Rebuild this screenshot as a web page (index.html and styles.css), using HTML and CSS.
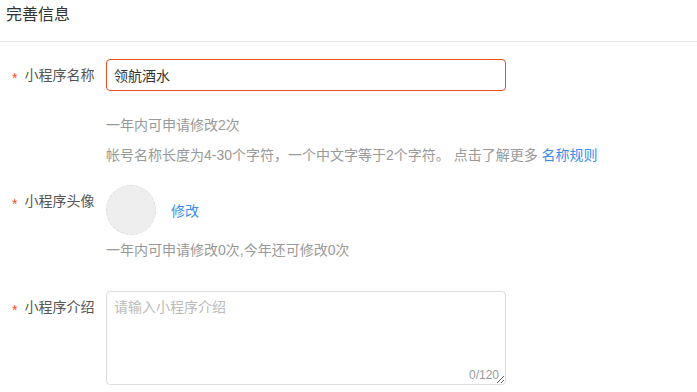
FILE: index.html
```html
<!DOCTYPE html>
<html lang="zh-CN">
<head>
<meta charset="utf-8">
<title>完善信息</title>
<link rel="stylesheet" href="styles.css">
</head>
<body>
<div class="page">
  <div class="header">完善信息</div>
  <div class="form">
    <div class="row row-name">
      <div class="label"><span class="star">*</span>小程序名称</div>
      <div class="field">
        <input class="text-input" type="text" value="领航酒水">
      </div>
    </div>
    <div class="help help-name">
      <div class="help-line">一年内可申请修改2次</div>
      <div class="help-line">帐号名称长度为4-30个字符，一个中文字等于2个字符。 点击了解更多 <a class="link" href="#">名称规则</a></div>
    </div>
    <div class="row row-avatar">
      <div class="label"><span class="star">*</span>小程序头像</div>
      <div class="field avatar-field">
        <div class="avatar"></div>
        <a class="link edit" href="#">修改</a>
      </div>
    </div>
    <div class="help">
      <div class="help-line">一年内可申请修改0次,今年还可修改0次</div>
    </div>
    <div class="row row-intro">
      <div class="label"><span class="star">*</span>小程序介绍</div>
      <div class="field textarea-wrap">
        <textarea class="textarea" placeholder="请输入小程序介绍"></textarea>
        <span class="counter">0/120</span>
      </div>
    </div>
  </div>
</div>
</body>
</html>
```

FILE: styles.css
```css
html, body {
  margin: 0;
  padding: 0;
  background: #fff;
}
body {
  font-family: "Liberation Sans", "Noto Sans CJK SC", sans-serif;
  font-size: 14px;
  color: #333;
}
.header {
  height: 42px;
  box-sizing: border-box;
  padding: 4px 0 0 6px;
  line-height: 22px;
  font-size: 16px;
  color: #333;
  border-bottom: 1px solid #e8e8e8;
}
.form {
  padding-left: 12px;
}
.row {
  display: flex;
  align-items: flex-start;
}
.row-name {
  margin-top: 17px;
}
.row-avatar {
  margin-top: 15px;
}
.row-intro {
  margin-top: 26px;
}
.label {
  width: 94px;
  height: 32px;
  flex: none;
  line-height: 32px;
  color: #555;
  white-space: nowrap;
}
.star {
  color: #f04c1d;
  margin-right: 7px;
  font-size: 14px;
  line-height: 0;
  vertical-align: -3px;
}
.text-input {
  display: block;
  width: 400px;
  height: 32px;
  box-sizing: border-box;
  border: 1px solid #ec4f1d;
  border-radius: 4px;
  padding: 0 7px;
  font: inherit;
  font-size: 14px;
  color: #333;
  outline: none;
}
.help {
  padding-left: 94px;
  color: #999;
  line-height: 30px;
}
.help-name {
  margin-top: 19px;
}
.link {
  color: #3b8ded;
  text-decoration: none;
}
.avatar-field {
  display: flex;
  align-items: center;
}
.avatar {
  width: 50px;
  height: 50px;
  box-sizing: border-box;
  border-radius: 50%;
  background: #eee;
  border: 1px dashed #ddd;
}
.edit {
  margin-left: 15px;
}
.textarea-wrap {
  position: relative;
  width: 400px;
  height: 94px;
}
.textarea {
  display: block;
  width: 400px;
  height: 94px;
  box-sizing: border-box;
  border: 1px solid #ddd;
  border-radius: 4px;
  padding: 5px 7px;
  font: inherit;
  font-size: 14px;
  line-height: 20px;
  color: #333;
  resize: vertical;
  outline: none;
}
.textarea::placeholder {
  color: #bbb;
}
.counter {
  position: absolute;
  right: 7px;
  bottom: 2px;
  font-size: 12px;
  line-height: 16px;
  color: #999;
}
```
